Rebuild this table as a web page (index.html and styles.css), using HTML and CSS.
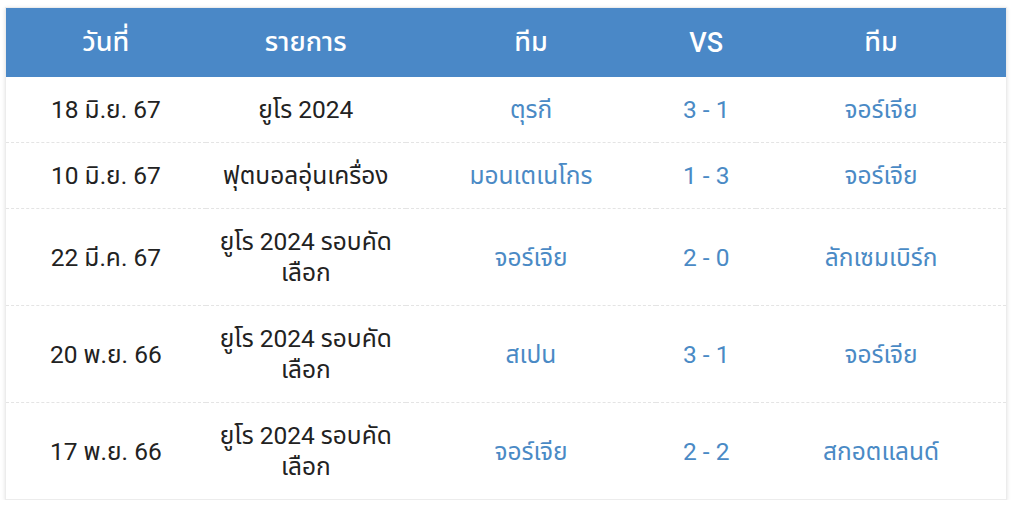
FILE: index.html
```html
<!DOCTYPE html>
<html lang="th">
<head>
<meta charset="utf-8">
<link rel="stylesheet" href="styles.css">
</head>
<body>
<div class="wrap">
<table class="matches">
  <colgroup>
    <col class="c-date"><col class="c-comp"><col class="c-team"><col class="c-vs"><col class="c-team">
  </colgroup>
  <thead>
    <tr><th>วันที่</th><th>รายการ</th><th>ทีม</th><th>VS</th><th>ทีม</th></tr>
  </thead>
  <tbody>
    <tr><td>18 มิ.ย. 67</td><td>ยูโร 2024</td><td class="link">ตุรกี</td><td class="link">3 - 1</td><td class="link">จอร์เจีย</td></tr>
    <tr><td>10 มิ.ย. 67</td><td>ฟุตบอลอุ่นเครื่อง</td><td class="link">มอนเตเนโกร</td><td class="link">1 - 3</td><td class="link">จอร์เจีย</td></tr>
    <tr><td>22 มี.ค. 67</td><td>ยูโร 2024 รอบคัดเลือก</td><td class="link">จอร์เจีย</td><td class="link">2 - 0</td><td class="link">ลักเซมเบิร์ก</td></tr>
    <tr><td>20 พ.ย. 66</td><td>ยูโร 2024 รอบคัดเลือก</td><td class="link">สเปน</td><td class="link">3 - 1</td><td class="link">จอร์เจีย</td></tr>
    <tr><td>17 พ.ย. 66</td><td>ยูโร 2024 รอบคัดเลือก</td><td class="link">จอร์เจีย</td><td class="link">2 - 2</td><td class="link">สกอตแลนด์</td></tr>
  </tbody>
</table>
</div>
</body>
</html>
```
FILE: styles.css
```css
html, body {
  margin: 0;
  padding: 0;
  background: #ffffff;
}
.wrap {
  padding: 7px 17px 0 5px;
}
.matches {
  width: 1002px;
  border-collapse: collapse;
  table-layout: fixed;
  font-family: Roboto, "Noto Sans", "Noto Sans Thai", sans-serif;
  box-shadow: 0 1px 4px rgba(0,0,0,0.12);
  border: 1px solid #ececec;
}
.c-date { width: 20%; }
.c-comp { width: 20%; }
.c-team { width: 25%; }
.c-vs { width: 10%; }
.matches th {
  background: #4a88c7;
  color: #ffffff;
  font-weight: 500;
  font-size: 27px;
  height: 69px;
  padding: 0;
  text-align: center;
}
.matches td {
  text-align: center;
  font-size: 24.5px;
  line-height: 31px;
  color: #222222;
  padding: 17px 10px;
  border-bottom: 1px dashed #e4e4e4;
}
.matches tbody tr:last-child td {
  border-bottom: none;
}
.matches td.link {
  color: #4a8ac5;
}
```
